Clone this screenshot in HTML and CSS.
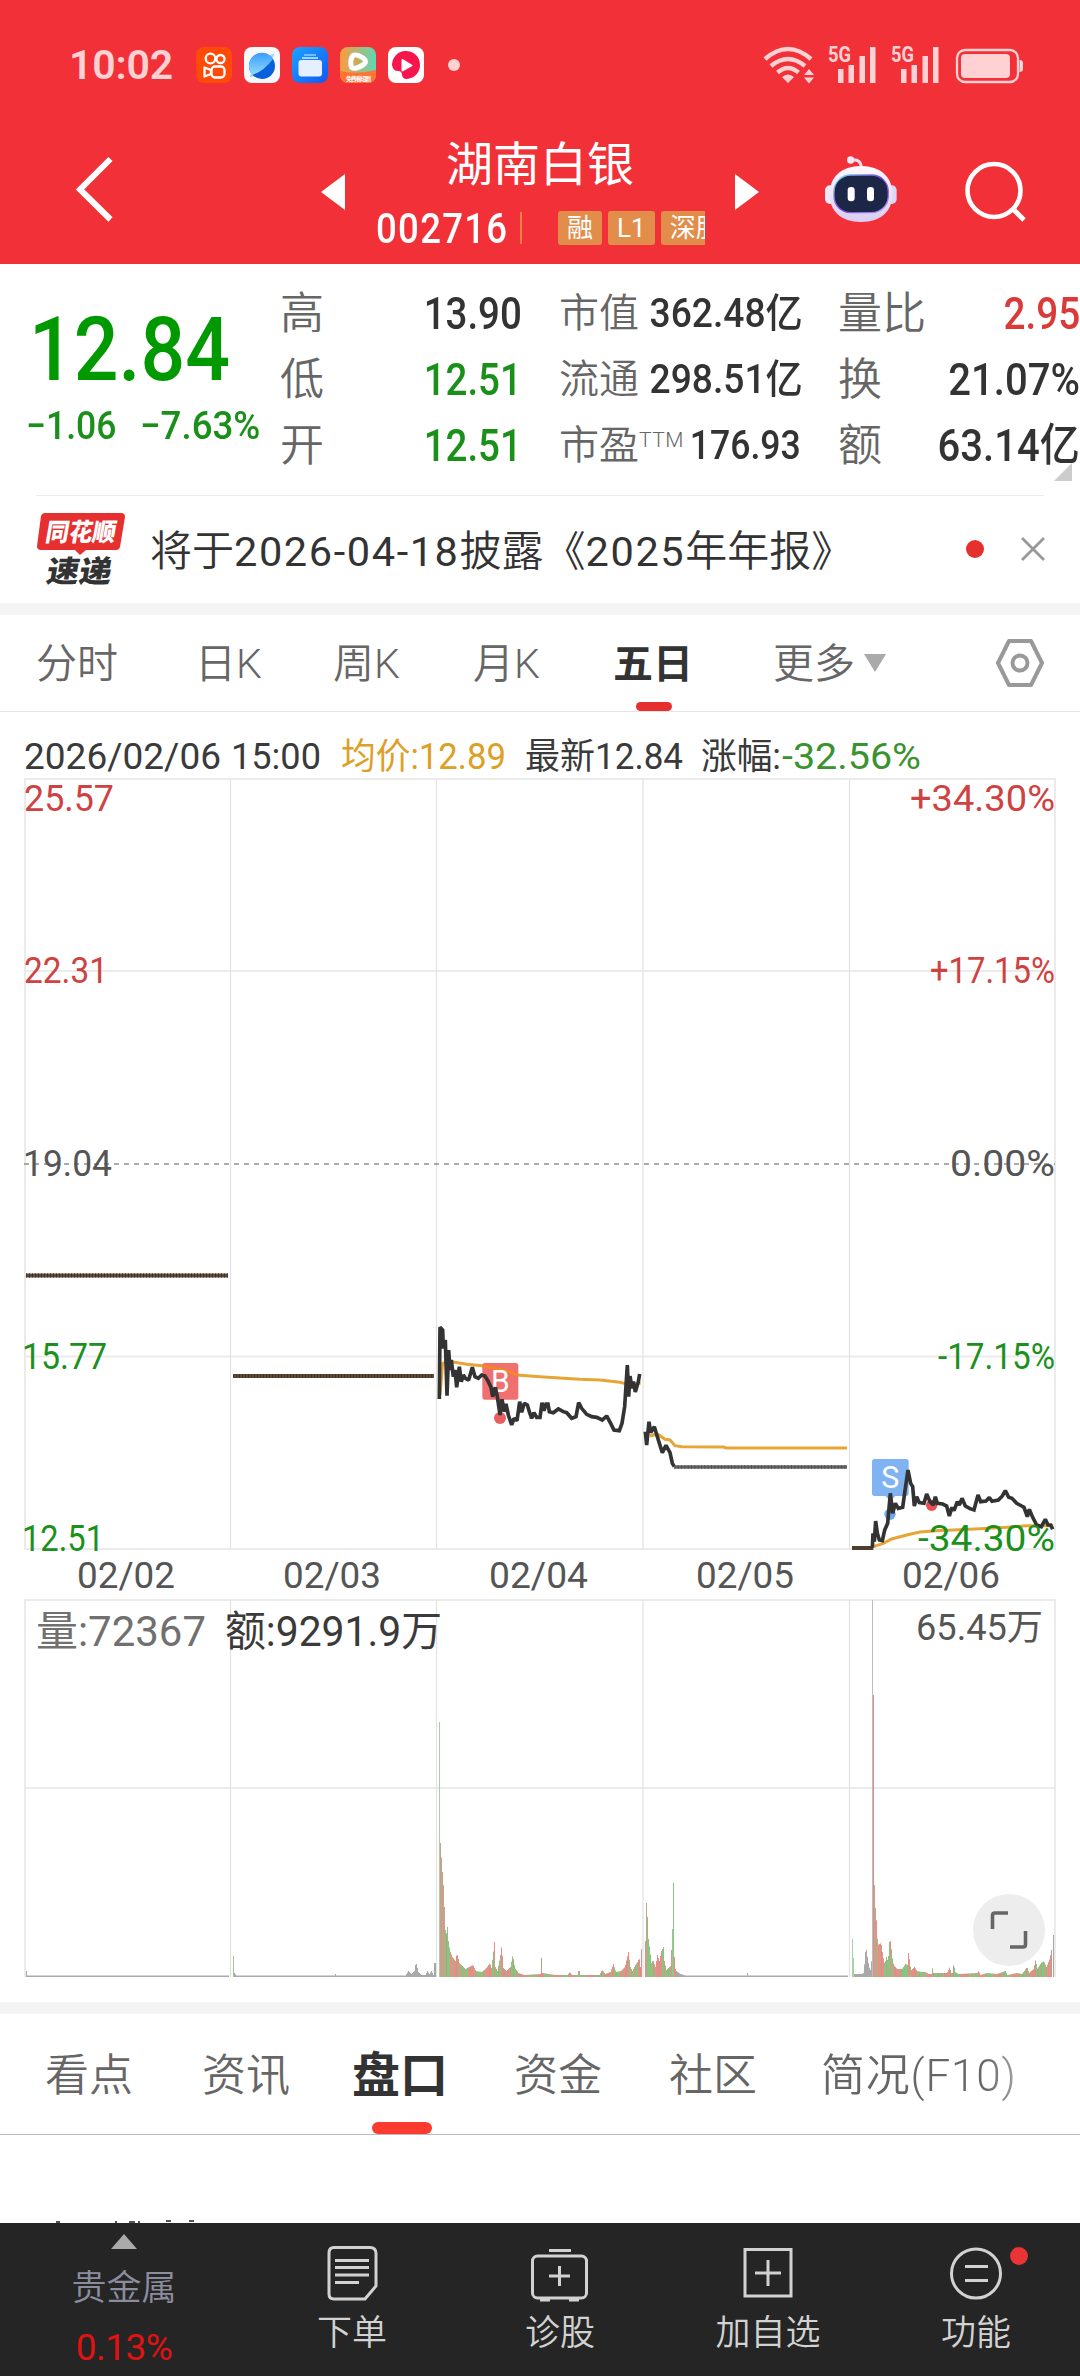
FILE: index.html
```html
<!DOCTYPE html>
<html lang="zh-CN">
<head>
<meta charset="utf-8">
<title>湖南白银 002716</title>
<link rel="stylesheet" href="styles.css">
</head>
<body>
<header class="top">
  <div class="status">
    <span class="time">10:02</span>
    <div class="apps">
      <svg width="36" height="36" viewBox="0 0 36 36"><rect width="36" height="36" rx="8" fill="#ff4a08"/><g fill="none" stroke="#fff" stroke-width="2.300"><circle cx="14.500" cy="11.500" r="4.800"/><circle cx="24.500" cy="12" r="4"/><rect x="15.500" y="19.500" width="13" height="11" rx="3.500"/><path d="M15 23l-6.500-2.500v9L15 27z" stroke-linejoin="round"/></g></svg>
      <svg width="36" height="36" viewBox="0 0 36 36"><defs><linearGradient id="planet" x1="0" y1="0" x2="0" y2="1"><stop offset="0" stop-color="#3b9cff"/><stop offset="1" stop-color="#8fdcff"/></linearGradient></defs><rect width="36" height="36" rx="8" fill="#f7f8fb"/><path d="M26 8q6-3 4 1L10 29q-5 3-4-1z" fill="#a8dcff"/><circle cx="18" cy="19" r="13" fill="#0a5fdc"/><path d="M5 20a13 13 0 0 1 24-8Q19 25 8 28a13 13 0 0 1-3-8z" fill="url(#planet)"/></svg>
      <svg width="36" height="36" viewBox="0 0 36 36"><defs><linearGradient id="files" x1="0" y1="0" x2="1" y2="1"><stop offset="0" stop-color="#1ca4ff"/><stop offset="1" stop-color="#1157f4"/></linearGradient></defs><rect width="36" height="36" rx="8" fill="url(#files)"/><path d="M12 7h12v2H12z" fill="#6cc0ff"/><path d="M10 10h16v2H10z" fill="#9fd4ff"/><rect x="6.500" y="13" width="23.500" height="16.500" rx="3" fill="#e6efff"/></svg>
      <svg width="36" height="36" viewBox="0 0 36 36"><defs><linearGradient id="video" x1="0" y1="0" x2="1" y2="0"><stop offset="0" stop-color="#ff9a3c"/><stop offset="1" stop-color="#5cd8b8"/></linearGradient><clipPath id="rnd"><rect width="36" height="36" rx="8"/></clipPath></defs><g clip-path="url(#rnd)"><rect width="36" height="36" fill="url(#video)"/><path d="M0 24q18 4 36-1v13H0z" fill="#ff7436"/></g><path d="M13 8.500q3-2 10 2.500 5 3.500 0 7-10 6-12 1-1-7 2-10.500z" fill="none" stroke="#fff" stroke-width="5" stroke-linejoin="round"/><path d="M15.500 11l5 3.500-5 4z" fill="#e0a03c"/><text x="6" y="33.500" class="micro" textLength="25">免费看短剧</text></svg>
      <svg width="36" height="36" viewBox="0 0 36 36"><rect width="36" height="36" rx="8" fill="#fff"/><path d="M4 18a14 14 0 1 1 19 13q-8 3-9-3 0-4-4-4-5 0-6-6z" fill="#f8144c"/><path d="M14.500 13l9 5.500-9 5z" fill="#fff" stroke="#fff" stroke-width="2" stroke-linejoin="round"/></svg>
    </div>
    <i class="more-dot"></i>
    <svg class="signals" width="264" height="60" viewBox="762 34 264 60">
      <g fill="none" stroke="#ffd1d3" stroke-width="4.500"><path d="M765 58q23-20 46 0M771 65q17-14 34 0M777.500 71.500q10.500-9 21 0"/></g>
      <path d="M782 76q6-5 12 0l-6 6z M804 74l5-6 5 6z M804 76.500h10l-5 6z" fill="#ffd1d3"/>
      <g fill="#ffd1d3"><path d="M838 68h5.500v14H838z M848.500 64h5.500v18h-5.500z M859.500 55h5.500v27h-5.500z M870 46h5.500v36H870z"/><path d="M901 68h5.500v14H901z M911.500 64h5.500v18h-5.500z M922.500 55h5.500v27h-5.500z M933 46h5.500v36H933z"/></g>
      <text x="828" y="61" class="net" textLength="23" lengthAdjust="spacingAndGlyphs">5G</text>
      <text x="891" y="61" class="net" textLength="23" lengthAdjust="spacingAndGlyphs">5G</text>
      <rect x="957" y="49" width="61" height="32" rx="8" fill="none" stroke="#ffd1d3" stroke-width="2.300"/><rect x="961" y="53" width="49" height="24" rx="4" fill="#ffd1d3"/><path d="M1019.500 59q3.500 0 3.500 3v6q0 3-3.500 3z" fill="#ffd1d3"/>
    </svg>
  </div>
  <div class="nav">
    <svg class="back" width="50" height="70" viewBox="70 154 50 70"><path d="M110.500 159L80 189.500l30.500 30" fill="none" stroke="#fff" stroke-width="6"/></svg>
    <svg class="prev" width="24" height="36" viewBox="0 0 24 36"><path d="M24 0v36L0 18z" fill="#fff"/></svg>
    <div class="stock">
      <h1>湖南白银</h1>
      <div class="code-row"><span class="code">002716</span><i class="bar"></i><span class="tag">融</span><span class="tag">L1</span><span class="tag cut">深股通</span></div>
    </div>
    <svg class="next" width="24" height="36" viewBox="0 0 24 36"><path d="M0 0v36l24-18z" fill="#fff"/></svg>
    <svg class="robot" width="100" height="100" viewBox="0 0 300 300"><defs><linearGradient id="shell" x1="0" y1="0" x2="0" y2="1"><stop offset="0" stop-color="#fffaff"/><stop offset="1" stop-color="#d9cdf2"/></linearGradient><linearGradient id="rim" x1="0" y1="0" x2="1" y2="1"><stop offset="0" stop-color="#7fe0ee"/><stop offset=".5" stop-color="#7c3fe0"/><stop offset="1" stop-color="#a9a2f4"/></linearGradient></defs><path d="M108 62q30-8 31 22" fill="none" stroke="#f3def0" stroke-width="9"/><circle cx="107" cy="60" r="11" fill="#f8e9f6"/><rect x="30" y="136" width="30" height="56" rx="15" fill="#efe8fb"/><rect x="216" y="136" width="29" height="56" rx="15" fill="#ddd6f6"/><path d="M138 78c60 0 94 34 94 84s-32 84-94 84-94-34-94-84 34-84 94-84z" fill="url(#shell)"/><rect x="57" y="105" width="163" height="113" rx="50" fill="#1c2748" stroke="url(#rim)" stroke-width="4"/><rect x="98" y="141" width="21" height="43" rx="10" fill="#fff"/><rect x="156" y="141" width="21" height="43" rx="10" fill="#fff"/></svg>
    <svg class="search" width="64" height="64" viewBox="963 160 64 64"><circle cx="994" cy="190.500" r="26.500" fill="none" stroke="#fff" stroke-width="4.600"/><path d="M1013 209l11 11" stroke="#fff" stroke-width="5"/></svg>
  </div>
</header>

<section class="quote">
  <div class="price-box">
    <div class="price"><span>12.84</span></div>
    <div class="change"><span>−1.06</span><span>−7.63%</span></div>
  </div>
  <dl class="stats a">
    <div><dt>高</dt><dd>13.90</dd></div>
    <div><dt>低</dt><dd class="down">12.51</dd></div>
    <div><dt>开</dt><dd class="down">12.51</dd></div>
  </dl>
  <dl class="stats b">
    <div><dt>市值</dt><dd>362.48<em>亿</em></dd></div>
    <div><dt>流通</dt><dd>298.51<em>亿</em></dd></div>
    <div><dt>市盈<sup>TTM</sup></dt><dd class="plain">176.93</dd></div>
  </dl>
  <dl class="stats c">
    <div><dt>量比</dt><dd class="up">2.95</dd></div>
    <div><dt>换</dt><dd>21.07%</dd></div>
    <div><dt>额</dt><dd>63.14<em>亿</em></dd></div>
  </dl>
  <i class="corner"></i>
</section>

<section class="news">
  <svg width="92" height="80" viewBox="36 509 92 80"><path d="M45 513h76q4 0 4 4l-5 30q-1 3-4 3H86l-6 5-5-5H41q-4 0-4-4l4-30q1-3 4-3z" fill="#e6302f"/><text x="44" y="541" class="logo-a" textLength="70" lengthAdjust="spacingAndGlyphs" transform="translate(96 0) skewX(-10)">同花顺</text><text x="44" y="582" class="logo-b" textLength="65" lengthAdjust="spacingAndGlyphs" transform="translate(104 0) skewX(-10)">速递</text></svg>
  <p>将于<span>2026-04-18</span>披露《<span>2025</span>年年报》</p>
  <i class="dot"></i>
  <svg class="close" width="26" height="26" viewBox="0 0 26 26"><path d="M2 2l22 22M24 2L2 24" stroke="#999" stroke-width="2.800"/></svg>
</section>
<div class="band"></div>

<nav class="periods">
  <span>分时</span><span>日K</span><span>周K</span><span>月K</span><span class="on">五日</span><span>更多<i class="caret"></i></span>
  <svg width="50" height="50" viewBox="0 0 50 50"><path d="M14 3h22l11 22-11 22H14L3 25z" fill="none" stroke="#999" stroke-width="4" stroke-linejoin="round"/><circle cx="25" cy="25" r="7.500" fill="none" stroke="#999" stroke-width="4"/></svg>
</nav>

<svg class="chart" width="1080" height="1290" viewBox="0 712 1080 1290">
  <g class="label">
    <text x="24" y="769" class="ink" textLength="197" lengthAdjust="spacingAndGlyphs">2026/02/06</text>
    <text x="231" y="769" class="ink" textLength="90" lengthAdjust="spacingAndGlyphs">15:00</text>
    <text x="341" y="769" class="avg-text" textLength="165" lengthAdjust="spacingAndGlyphs">均价:12.89</text>
    <text x="525" y="769" class="ink" textLength="158" lengthAdjust="spacingAndGlyphs">最新12.84</text>
    <text x="701" y="769" class="ink" textLength="80" lengthAdjust="spacingAndGlyphs">涨幅:</text>
    <text x="782" y="769" class="drop" textLength="139" lengthAdjust="spacingAndGlyphs">-32.56%</text>
  </g>
  <path d="M24 779H1056M24 971H1056M24 1356.500H1056M24 1549H1056M24 1600H1056M24 1788H1056M25 778V1549M1055 778V1549M25 1599V1977M1055 1599V1977" stroke="#ebebeb" stroke-width="2" fill="none"/>
  <path d="M230.500 779V1549M436.500 779V1549M643 779V1549M849.500 779V1549M230.500 1600V1977M436.500 1600V1977M643 1600V1977M849.500 1600V1977" stroke="#e2e2e2" stroke-width="1.200" fill="none"/>
  <path d="M24 1164H1055" stroke="#909090" stroke-width="1.500" stroke-dasharray="5 5"/>

  <path d="M26 1275.500H228M233 1376H434" stroke="#5f4b37" stroke-width="4"/>
  <path d="M26 1275.500H228M233 1376H434" stroke="#3d3128" stroke-width="4" stroke-dasharray="1 2"/>

  <g transform="translate(420 1300) scale(.33333)" fill="none" stroke-linejoin="miter" stroke-miterlimit="1.500">
    <path class="avg" d="M60 285L68 190 95 185 140 193 195 198 240 207 290 225 360 230 430 235 480 238 540 240 600 247 612 250H662M690 408L712 402 735 418 750 420 765 437 785 440 910 441 920 444H1281"/>
    <path d="M195 189h92q8 0 8 8v94q0 8-8 8h-34l-13 14-13-14h-32q-8 0-8-8v-94q0-8 8-8z" fill="#ef6464" fill-opacity=".93"/>
    <path d="M187 198L220 203 260 213 294 225" stroke="#f58628" stroke-width="9"/>
    <text x="213" y="276" class="flag" textLength="56" lengthAdjust="spacingAndGlyphs">B</text>
    <circle cx="240" cy="354" r="18" fill="#e95f5f"/>
    <path class="px" d="M58 297L60 82 68 90 70 145 76 120 81 287 86 150 90 210 94 180 100 230 105 210 110 262 118 200 124 245 130 225 137 236 146 240 157 202 165 230 175 235 185 225 195 228 205 245 213 262 218 290 226 262 232 290 240 345 246 298 253 335 258 312 265 345 275 375 282 355 291 362 299 305 305 337 313 310 322 315 328 335 335 355 342 338 350 352 360 352 366 308 372 332 378 312 384 312 388 335 400 338 415 327 430 335 440 338 455 355 468 350 476 308 485 325 500 343 515 350 530 352 547 360 560 348 572 370 582 390 598 392 606 370 614 320 622 195 626 290 630 228 636 265 640 245 646 276 655 245 659 222M676 395L680 435 687 365 692 398 703 380 715 420 727 458 738 436 750 458 757 490 763 500"/>
    <path d="M763 501H1281" stroke="#666" stroke-width="11"/><path d="M763 501H1281" stroke="#4c4c4c" stroke-width="11" stroke-dasharray="3 7"/>
  </g>
  <g transform="translate(820 1420) scale(.33333)" fill="none" stroke-miterlimit="1.500">
    <path d="M164 117h94q8 0 8 8v95q0 8-8 8h-32l-15 15-15-15h-32q-8 0-8-8v-95q0-8 8-8z" fill="#7fb3f2"/>
    <text x="184" y="204" class="flag" textLength="54" lengthAdjust="spacingAndGlyphs">S</text>
    <circle cx="210" cy="283" r="17" fill="#6fa9ee"/><circle cx="335" cy="256" r="17" fill="#e95050"/>
    <path d="M96 384H160" stroke="#4d3f30" stroke-width="12"/>
    <path class="avg" d="M160 380L190 370 215 357 260 345 300 336 350 332 480 326 560 322 620 317 700 317"/>
    <path class="px" d="M157 383L159 340 163 365 167 303 172 340 178 360 187 362 194 330 203 310 211 220 218 280 226 250 235 265 248 262 256 205 264 150 272 190 278 200 283 258 290 230 298 248 312 250 320 222 330 245 340 255 346 230 352 250 368 252 380 258 388 288 396 262 402 272 412 245 418 255 426 235 436 258 450 266 462 270 474 225 482 245 498 243 508 233 516 244 535 240 547 228 556 212 566 232 576 235 590 250 605 258 612 262 622 290 628 268 638 292 650 315 664 320 676 298 684 315 692 315 698 328"/>
  </g>

  <g class="label">
    <text x="24" y="811" class="rise" textLength="90" lengthAdjust="spacingAndGlyphs">25.57</text>
    <text x="24" y="983" class="rise" textLength="84" lengthAdjust="spacingAndGlyphs">22.31</text>
    <text x="23" y="1176" class="mid" textLength="89" lengthAdjust="spacingAndGlyphs">19.04</text>
    <text x="22" y="1369" class="fall" textLength="85" lengthAdjust="spacingAndGlyphs">15.77</text>
    <text x="22" y="1551" class="fall" textLength="82" lengthAdjust="spacingAndGlyphs">12.51</text>
    <text x="910" y="811" class="rise" textLength="145" lengthAdjust="spacingAndGlyphs">+34.30%</text>
    <text x="930" y="983" class="rise" textLength="125" lengthAdjust="spacingAndGlyphs">+17.15%</text>
    <text x="950" y="1176" class="mid" textLength="105" lengthAdjust="spacingAndGlyphs">0.00%</text>
    <text x="938" y="1369" class="fall" textLength="117" lengthAdjust="spacingAndGlyphs">-17.15%</text>
    <text x="918" y="1551" class="fall" textLength="137" lengthAdjust="spacingAndGlyphs">-34.30%</text>
    <text x="77" y="1588" class="mid" textLength="98" lengthAdjust="spacingAndGlyphs">02/02</text>
    <text x="283" y="1588" class="mid" textLength="98" lengthAdjust="spacingAndGlyphs">02/03</text>
    <text x="489" y="1588" class="mid" textLength="99" lengthAdjust="spacingAndGlyphs">02/04</text>
    <text x="696" y="1588" class="mid" textLength="98" lengthAdjust="spacingAndGlyphs">02/05</text>
    <text x="902" y="1588" class="mid" textLength="98" lengthAdjust="spacingAndGlyphs">02/06</text>
    <text x="916" y="1640" class="mid" textLength="127" lengthAdjust="spacingAndGlyphs">65.45万</text>
  </g>
  <g class="label big">
    <text x="36" y="1646" class="soft" textLength="170" lengthAdjust="spacingAndGlyphs">量:72367</text>
    <text x="225" y="1646" class="ink" textLength="217" lengthAdjust="spacingAndGlyphs">额:9291.9万</text>
  </g>
  <g id="volume"></g>
  <circle cx="1009" cy="1930" r="36" fill="#ededed"/>
  <path d="M992.500 1929v-13.500q0-2.500 2.500-2.500h13M1025.500 1931v13.500q0 2.500-2.500 2.500h-13" fill="none" stroke="#666" stroke-width="3.600"/>
</svg>

<div class="band"></div>
<nav class="sections">
  <span>看点</span><span>资讯</span><span class="on">盘口</span><span>资金</span><span>社区</span><span class="fade">简况(F10)</span>
</nav>
<div class="below"><svg width="240" height="3" viewBox="0 0 240 3"><path d="M56 1h4v2h-4zM115 1h2v2h-2zM129 1h6v2h-6zM138 1h2v2h-2zM166 0h5v2h-5zM189 0h5v2h-5z" fill="#555"/></svg></div>

<footer class="bottom">
  <div class="index"><i class="tri"></i><span class="name">贵金属</span><span class="pct">0.13%</span></div>
  <div class="item"><svg width="60" height="60" viewBox="322 2244 60 60"><path d="M334 2247.500h36q6 0 6 6V2286l-11 13h-31q-5 0-5-5v-41q0-5.500 5-5.500z"/><path d="M335 2260.500h34M335 2267.500h34M335 2275h34M335 2282.500h24"/></svg><span>下单</span></div>
  <div class="item"><svg width="60" height="60" viewBox="530 2244 60 60"><rect x="532.500" y="2256" width="54" height="42" rx="5"/><path d="M549 2250.500h22M559.500 2266v20M549 2276h21M540 2300h10M569 2300h10"/></svg><span>诊股</span></div>
  <div class="item"><svg width="60" height="60" viewBox="737 2244 60 60"><rect x="744" y="2249.500" width="46" height="46.500"/><path d="M767 2260v26M754 2273h26"/></svg><span>加自选</span></div>
  <div class="item"><svg width="60" height="60" viewBox="945 2244 60 60"><circle cx="975" cy="2273.500" r="24.500"/><path d="M964 2266.500h23M964 2280.500h23"/></svg><span>功能</span><i class="badge"></i></div>
</footer>
<script src="chart.js"></script>
</body>
</html>
```
FILE: styles.css
```css
* { box-sizing: border-box; }
body { margin: 0; width: 1080px; height: 2376px; overflow: hidden; background: #fff; color: #333; font-family: Roboto, "Noto Sans CJK SC", sans-serif; }
i, em { font-style: normal; font-weight: inherit; }
svg { display: block; flex: none; }
dl, dd, h1, p { margin: 0; }

.top { height: 264px; background: #f23038; color: #fff; }
.status { height: 130px; display: flex; align-items: center; padding-left: 69px; }
.time { width: 127px; font-size: 41px; font-weight: 600; letter-spacing: -.2px; color: #ffd1d3; }
.apps { display: flex; gap: 12px; }
.micro { font-size: 6px; fill: #fff; font-weight: 700; }
.more-dot { width: 12px; height: 12px; border-radius: 50%; background: #ffd1d3; margin-left: 24px; }
.signals { margin-left: 302px; }
.net { font-size: 22px; font-weight: 700; fill: #ffd1d3; }

.nav { height: 134px; display: flex; }
.back { margin: 24px 0 0 70px; }
.prev { margin: 44px 0 0 201px; }
.stock { width: 330px; margin: 0 30px; }
.stock h1 { margin-top: 6px; font-size: 47px; line-height: 58px; font-weight: 400; text-align: center; }
.code-row { display: flex; align-items: center; height: 36px; margin-top: 16px; overflow: hidden; }
.code { width: 135px; flex: none; font-size: 42px; font-weight: 500; letter-spacing: 1.500px; line-height: 36px; transform: scaleX(.87); transform-origin: left; margin: 1px -1px 0 1px; }
.bar { width: 2px; height: 32px; background: #f28044; margin: 0 36px 0 10px; flex: none; }
.tag { flex: none; height: 34px; line-height: 34px; padding: 0 9px; border-radius: 3px; background: #e28d4a; font-size: 26px; margin-right: 6px; }
.tag.cut { margin-right: 0; }
.next { margin: 44px 0 0; }
.robot { margin: 10px 0 0 56px; }
.search { margin: 30px 0 0 48px; }

.quote { position: relative; height: 232px; margin-bottom: -1px; display: grid; grid-template-columns: 280px 242px 37px 242px 37px 242px; padding-top: 17px; }
.quote::after { content: ""; position: absolute; left: 36px; right: 36px; bottom: 0; height: 1px; background: #ebebeb; }
.price-box { grid-column: 1; }
.price { height: 135px; line-height: 138px; padding-left: 29px; font-size: 89px; font-weight: 500; color: #090; }
.price span { display: inline-block; transform: scaleX(.885); transform-origin: left; }
.change { display: flex; color: #1a8f1a; font-size: 39px; font-weight: 500; line-height: 20px; padding-left: 26px; }
.change span { display: inline-block; width: 114px; transform: scaleX(.91); transform-origin: left; white-space: nowrap; }
.change span + span { transform: scaleX(.94); }
.stats div { height: 66px; display: flex; align-items: center; justify-content: space-between; line-height: 66px; white-space: nowrap; }
.stats dt { font-size: 44px; font-weight: 350; color: #666; }
.stats dd { margin-left: -30px; font-size: 45px; font-weight: 500; transform: scaleX(.855); transform-origin: right; }
.stats dd.down { color: #1a8f1a; }
.stats dd.up { color: #d93a3a; }
.stats.b { grid-column: 4; }
.stats.c { grid-column: 6; }
.stats.b dt { font-size: 40px; }
.stats.b dd { font-size: 40px; margin-right: -2px; transform: scaleX(.93); }
.stats.b dd.plain { margin-right: 0; transform: scaleX(.89); }
.stats.c dd { transform: scaleX(.89); }
.stats.c dd.up { transform: scaleX(.86); }
.stats sup { font-size: 21px; line-height: 0; vertical-align: 12px; letter-spacing: .5px; }
.corner { position: absolute; left: 1054px; top: 199px; width: 18px; height: 18px; background: #ccc; clip-path: polygon(100% 0, 100% 100%, 0 100%); }

.news { height: 108px; display: flex; align-items: center; padding: 0 0 0 36px; }
.news p { flex: none; width: 816px; margin-left: 22px; padding-bottom: 3px; font-size: 42px; font-weight: 350; white-space: nowrap; text-spacing-trim: space-all; }
.news p span { font-weight: 400; font-size: 41.500px; letter-spacing: 1.600px; }
.news .dot { width: 18px; height: 18px; border-radius: 50%; background: #e6302f; }
.news .close { margin-left: 36px; }
.logo-a { font-size: 25px; font-weight: 900; fill: #fff; }
.logo-b { font-size: 30px; font-weight: 900; fill: #333; }
.band { height: 12px; background: #f4f4f4; }

.periods { height: 97px; display: grid; grid-template-columns: 159px 138px 140px 140px 160px 222px 50px; align-items: center; padding: 0 0 0 36px; border-bottom: 1px solid #e4e4e4; font-size: 41px; font-weight: 350; color: #666; line-height: 96px; }
.periods > span { height: 96px; line-height: 99px; }
.on { position: relative; color: #333; font-weight: 700; }
.on::after { content: ""; position: absolute; left: 50%; bottom: 0; border-radius: 5px; background: #e6302f; }
.periods .on { width: 80px; font-size: 40px; }
.periods .on::after { width: 36px; height: 9px; margin-left: -17px; }
.caret { display: inline-block; width: 22px; height: 18px; margin-left: 9px; background: #aaa; clip-path: polygon(0 0, 100% 0, 50% 100%); vertical-align: 6px; }

.label { font-size: 36px; }
.label.big { font-size: 42px; }
.ink { fill: #3a3a3a; }
.soft { fill: #707070; }
.mid { fill: #555; }
.rise { fill: #cf4242; }
.fall { fill: #1c901c; }
.drop { fill: #3a9330; }
.avg-text { fill: #dda026; }
.flag { font-size: 92px; fill: #fff; }
.avg { stroke: #e6a535; stroke-width: 9; }
.px { stroke: #333; stroke-width: 11; }

.sections { height: 121px; display: grid; grid-template-columns: 157px 150px 162px 155px 152px 1fr; align-items: center; padding-left: 45px; border-bottom: 1px solid #bbb; font-size: 44px; font-weight: 350; color: #666; line-height: 120px; white-space: nowrap; }
.sections > span { height: 120px; line-height: 124px; }
.sections .on { width: 96px; font-size: 48px; }
.sections .on::after { width: 60px; height: 12px; margin-left: -28px; border-radius: 6px; background: #fb3b30; }
.fade { width: 200px; letter-spacing: .8px; background: linear-gradient(90deg, #666 82%, #aaa); background-clip: text; -webkit-background-clip: text; color: transparent; }
.below { height: 88px; display: flex; align-items: flex-end; }

.bottom { height: 153px; display: grid; grid-template-columns: 248px repeat(4, 208px); background: #252525; color: #d2d2d2; font-weight: 350; }
.index { display: flex; flex-direction: column; align-items: center; padding-top: 11px; }
.tri { width: 26px; height: 15px; background: #aaa; clip-path: polygon(50% 0, 100% 100%, 0 100%); }
.name { margin-top: 18px; font-size: 35px; line-height: 44px; color: #8b8d9c; }
.pct { margin-top: 17px; font-size: 37px; line-height: 40px; font-weight: 400; letter-spacing: -.5px; color: #e01212; }
.item { position: relative; display: flex; flex-direction: column; align-items: center; padding-top: 21px; }
.item svg { fill: none; stroke: #d2d2d2; stroke-width: 3; }
.item span { margin-top: 7px; font-size: 35px; line-height: 46px; }
.badge { position: absolute; left: 138px; top: 24px; width: 18px; height: 18px; border-radius: 50%; background: #e83434; }
```
FILE: chart.js
```js
// Volume per minute as [x, height] key points; values between them are interpolated.
const BASE = 1977;
const days = [
  { from: 26, to: 228, tone: "flat", pts: [[26,6],[27,1.5],[228,1.5]] },
  { from: 233, to: 435, tone: "flat", pts: [[233,21],[234,4],[236,1.5],[334,1.5],[335,3],[336,1.5],[405,1.5],[408,6],[411,3],[414,6],[415.500,15],[418,5],[421,2],[425,2],[427,6],[429,3],[431,6],[433,2],[434,14]] },
  { from: 440, to: 641, tone: "mix", pts: [[440,134],[442,105],[443.300,88],[444,70],[445,47],[446.500,42],[447.500,58],[448,36],[449.500,26],[452,20],[455,16],[456.500,24],[459,14],[462,11],[465,8],[472.500,12],[475.500,6],[481.500,5],[486,9],[489.500,14],[491,9],[493.300,28],[494,35],[495,10],[497,6],[499.700,20],[501.200,31],[503,9],[506,6],[510,10],[512.300,22],[514.500,9],[518,4],[524,2],[540,3],[541,19],[542,4],[555,2],[567,2],[569.500,5],[571.500,2],[577,2],[578.500,8],[580,2],[599,2],[601.600,7],[605,3],[610,5],[613,13],[615.500,5],[620.500,6],[624.500,10],[628,25],[630,10],[632,6],[635,12],[637.700,16],[638.700,20],[640,10],[641,28]] },
  { from: 645, to: 675, tone: "mix", pts: [[645,36],[646,74],[647,60],[648,38],[649.700,25],[651,14],[652.700,17],[655,10],[657,22],[659,16],[661,26],[663,30],[664,16],[666,7],[668,9],[670,11],[671,27],[672,48],[673,94],[674,20],[675,8]] },
  { from: 676, to: 847, tone: "flat", pts: [[676,6],[680,3],[685,1.500],[746,1.500],[747,4],[748,1.500],[847,1.500]] },
  { from: 854, to: 871, tone: "flat", pts: [[854,3],[861,3],[863.300,4],[865,25],[866.300,28],[867.300,17],[869.300,8],[870.700,6],[871.700,38]] },
  { from: 873, to: 1051, tone: "mix", pts: [[873,100],[874,92],[874.700,73],[876.300,53],[877.300,32],[880.700,34],[882.700,20],[884.300,13],[886,20],[887.700,15],[888.700,35],[890.300,36],[891.700,20],[893.300,12],[896.700,8],[901.700,8],[905,13],[907.300,12],[908.300,29],[909.300,13],[911,7],[914,10],[916.700,6],[921.700,5],[925,5],[928.300,3],[931,3],[931.700,10],[933,4],[946.700,4],[949.300,10],[950.700,4],[952,4],[953.300,14],[954.700,5],[958,3],[976.700,4],[978.300,6],[980,2],[986.700,4],[996.700,3],[1005,6],[1007,2],[1016.700,4],[1021.700,3],[1026.700,10],[1028.700,4],[1033.300,8],[1035.300,18],[1036.700,8],[1040.700,14],[1043.300,16],[1046,10],[1049.300,18],[1051,27]] },
];
const singles = [[439,255,"#a4d0a2"],[673,94,"#8ec48a"],[672,48,"#93c98c"],[852,38,"#a5d3a2"],[853,19,"#a5d3a2"],[872,377,"#bdbdbd"],[873,282,"#d7908a"],[1053,42,"#a8a8a8"],[233,21,"#a0c49e"]];

function heightAt(pts, x) {
  for (let i = 1; i < pts.length; i++) {
    if (x <= pts[i][0]) {
      const [x0, h0] = pts[i - 1], [x1, h1] = pts[i];
      return h0 + (h1 - h0) * Math.max(0, (x - x0) / (x1 - x0));
    }
  }
  return pts[pts.length - 1][1];
}

const layer = document.getElementById("volume");
function bar(x, h, color) {
  const r = document.createElementNS("http://www.w3.org/2000/svg", "rect");
  r.setAttribute("x", x);
  r.setAttribute("y", BASE - h);
  r.setAttribute("width", 1);
  r.setAttribute("height", h);
  r.setAttribute("fill", color);
  layer.appendChild(r);
}

for (const day of days) {
  for (let x = day.from; x <= day.to; x++) {
    const h = Math.max(1.5, heightAt(day.pts, x));
    const wave = Math.sin(x * 1.7) + Math.sin(x * 0.37);
    const mixed = h > 60 ? "#c9a08c" : wave > 0.15 ? "#86c780" : wave < -0.15 ? "#ee8a87" : "#b3a384";
    bar(x, h, day.tone === "flat" ? "#a9a9a9" : mixed);
  }
}
for (const [x, h, color] of singles) bar(x, h, color);
```
